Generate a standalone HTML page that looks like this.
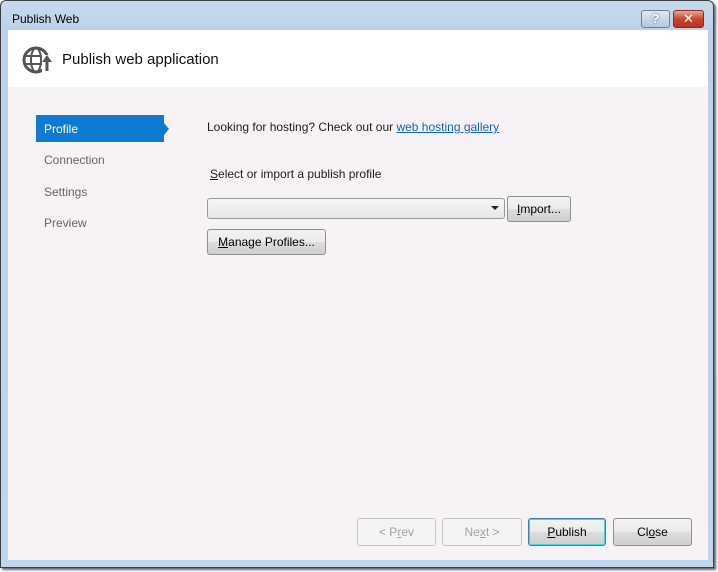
<!DOCTYPE html>
<html><head><style>
*{margin:0;padding:0;box-sizing:border-box}
body{width:718px;height:572px;background:#fff;position:relative;overflow:hidden;font-family:"Liberation Sans","DejaVu Sans",sans-serif;font-size:12px;color:#1e1e1e}
.win{position:absolute;left:0;top:0;width:714px;height:568px;border:1px solid #3a3f44;border-radius:6px 6px 0 0;background:linear-gradient(#c8d9ec,#bcd2ea 30px,#c0d5ee);box-shadow:2px 2px 2px #666}
.title{position:absolute;left:11px;top:11px;font-size:12px;color:#000}
.hdr{position:absolute;left:8px;top:30px;width:700px;height:57px;background:#fff}
.body{position:absolute;left:8px;top:87px;width:700px;height:473px;background:#f6f2f6}
.btn{position:absolute;border:1px solid #8e8f8f;border-radius:3px;background:linear-gradient(#f2f2f2,#ebebeb 50%,#dddddd 51%,#cfcfcf);text-align:center;font-size:12px;color:#000;line-height:21px}
.dis{border-color:#c5c5c5;background:#f4f4f4;color:#a0a0a0}
.nav{position:absolute;left:36px;font-size:12px;color:#666}
u{text-decoration:underline}
</style></head><body>
<div class="win">
<div class="title">Publish Web</div>
<div style="position:absolute;left:640px;top:9px;width:29px;height:18px;border:1px solid #6d7f96;border-radius:3px;background:linear-gradient(#dfe8f3,#b3c6df);color:#fff;font-weight:bold;text-align:center;line-height:16px;font-size:13px;text-shadow:0 0 2px #456">?</div>
<div style="position:absolute;left:672px;top:9px;width:31px;height:18px;border:1px solid #8b2b1f;border-radius:3px;background:linear-gradient(#e9a99a,#c9452f 50%,#b8321f);color:#fff;font-weight:bold;text-align:center;line-height:16px;font-size:13px">✕</div>
</div>
<div class="hdr">
<svg style="position:absolute;left:14px;top:15px" width="32" height="30" viewBox="0 0 32 30">
<circle cx="14" cy="15" r="12" fill="none" stroke="#555" stroke-width="3"/>
<ellipse cx="14" cy="15" rx="5" ry="12" fill="none" stroke="#555" stroke-width="2"/>
<line x1="2" y1="11" x2="26" y2="11" stroke="#555" stroke-width="2"/>
<line x1="2" y1="19" x2="26" y2="19" stroke="#555" stroke-width="2"/>
<rect x="20" y="10" width="12" height="18" fill="#fff"/>
<path d="M25 26 V16" stroke="#555" stroke-width="3"/>
<path d="M20 17 L25 10 L30 17 Z" fill="#555"/>
</svg>
<div style="position:absolute;left:54px;top:21px;font-size:15px;color:#111">Publish web application</div>
</div>
<div class="body"></div>
<div style="position:absolute;left:36px;top:115px;width:128px;height:27px;background:#0e7bd0"></div>
<div style="position:absolute;left:164px;top:123px;width:0;height:0;border-left:5px solid #0e7bd0;border-top:6px solid transparent;border-bottom:6px solid transparent"></div>
<div class="nav" style="left:44px;top:122px;color:#fff">Profile</div>
<div class="nav" style="left:44px;top:153px">Connection</div>
<div class="nav" style="left:44px;top:185px">Settings</div>
<div class="nav" style="left:44px;top:216px">Preview</div>
<div style="position:absolute;left:207px;top:120px">Looking for hosting? Check out our <span style="color:#0c66c8;text-decoration:underline">web hosting gallery</span></div>
<div style="position:absolute;left:210px;top:167px"><u>S</u>elect or import a publish profile</div>
<div style="position:absolute;left:207px;top:198px;width:298px;height:21px;border:1px solid #999;border-radius:3px;background:linear-gradient(#f7f7f7,#e6e6e6)"></div>
<div style="position:absolute;left:491px;top:206px;width:0;height:0;border-top:4px solid #222;border-left:4px solid transparent;border-right:4px solid transparent"></div>
<div class="btn" style="left:507px;top:196px;width:64px;height:26px;line-height:24px"><u>I</u>mport...</div>
<div class="btn" style="left:207px;top:229px;width:119px;height:26px;line-height:24px"><u>M</u>anage Profiles...</div>
<div class="btn dis" style="left:357px;top:518px;width:79px;height:28px;line-height:26px">&lt; P<u>r</u>ev</div>
<div class="btn dis" style="left:442px;top:518px;width:80px;height:28px;line-height:26px">Ne<u>x</u>t &gt;</div>
<div class="btn" style="left:528px;top:518px;width:78px;height:28px;line-height:26px;border-color:#3c7fb1;box-shadow:inset 0 0 0 1px #4cd0f0"><u>P</u>ublish</div>
<div class="btn" style="left:613px;top:518px;width:79px;height:28px;line-height:26px">Cl<u>o</u>se</div>
</body></html>
